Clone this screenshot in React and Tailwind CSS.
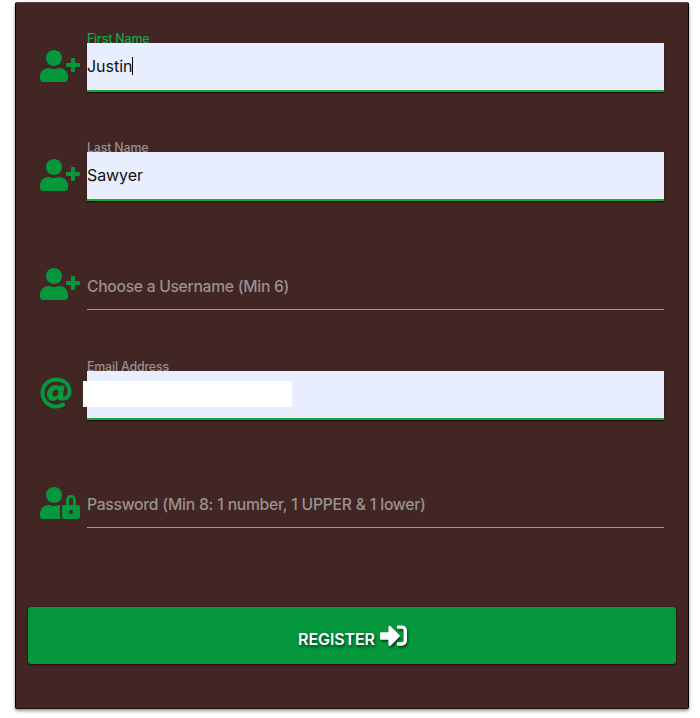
import { FaAt, FaSignInAlt, FaUserLock, FaUserPlus } from "react-icons/fa";

const fields = [
  { icon: FaUserPlus, label: "First Name", value: "Justin", focused: true, height: "h-[109px]", tracking: "tracking-[-0.02px]" },
  { icon: FaUserPlus, label: "Last Name", value: "Sawyer", height: "h-[109px]", tracking: "tracking-[-0.08px]" },
  { icon: FaUserPlus, label: "Choose a Username (Min 6)", height: "h-[110px]", line: "h-[60px] pt-[15px]", tracking: "tracking-[-0.3px]" },
  { icon: FaAt, label: "Email Address", value: "", redacted: true, height: "h-[109px]", tracking: "" },
  { icon: FaUserLock, label: "Password (Min 8: 1 number, 1 UPPER & 1 lower)", height: "h-[109px]", line: "h-[59px] pt-[14px]", tracking: "tracking-[-0.29px] [word-spacing:0.3px]" },
];

function Field({ icon: Icon, label, value, focused, redacted, height, line, tracking }) {
  const filled = value !== undefined;
  return (
    <div className={`flex ${height}`}>
      <div className={`w-[47px] shrink-0 ${redacted ? "pt-[17px]" : "pt-[18px]"}`}>
        <Icon className={`h-8 text-[#04973c] ${redacted ? "w-8" : "w-10"}`} />
      </div>
      <div className="w-[577px]">
        {filled ? (
          <>
            <div
              className={`-mt-px h-3 whitespace-nowrap text-[12.4px] font-[450] leading-[15px] tracking-[-0.18px] ${
                focused ? "text-[#12a84a]" : "text-[#9a8f8e]"
              }`}
            >
              {label}
            </div>
            <div className="relative flex h-[49px] items-center border-b-2 border-[#0fae35] bg-[#e8eefe] pb-px text-base text-[#111] shadow-[0_1px_1px_#2b0a14]">
              <span className={tracking}>{value}</span>
              {focused && <span className="h-[18px] w-px bg-black" />}
              {redacted && <span className="absolute -left-1 top-[10px] h-[26px] w-[209px] bg-white" />}
            </div>
          </>
        ) : (
          <div className={`flex items-center border-b border-[#a0989a] text-[15.7px] font-[450] text-[#9a9190] ${line}`}>
            <span className={tracking}>{label}</span>
          </div>
        )}
      </div>
    </div>
  );
}

export default function App() {
  return (
    <div className="h-[718px] w-[700px] overflow-hidden bg-white pl-[15px] pt-[2px] font-['Inter','Liberation_Sans',sans-serif]">
      <form className="h-[707px] w-[674px] rounded-[2px] border border-black border-t-[#5b4646] border-b-[#2a0508] bg-[#412623] pt-[29px] shadow-[0_2px_3px_rgba(0,0,0,0.35),0_1px_6px_rgba(0,0,0,0.12)]">
        <div className="pl-6">
          {fields.map((field) => (
            <Field key={field.label} {...field} />
          ))}
        </div>
        <button
          type="button"
          className="ml-3 mt-[29px] flex h-[57px] w-[648px] items-center justify-center gap-[5px] rounded-[3px] bg-[#04973c] pl-px text-white shadow-[0_1px_2px_#260311,0_0_1px_#260311]"
        >
          <span className="pt-[7px] text-base font-semibold tracking-[-0.1px] [text-shadow:1px_2px_3px_rgba(0,0,0,0.6)]">
            REGISTER
          </span>
          <FaSignInAlt className="size-[27px] drop-shadow-[1px_2px_1px_rgba(0,0,0,0.55)]" />
        </button>
      </form>
    </div>
  );
}
